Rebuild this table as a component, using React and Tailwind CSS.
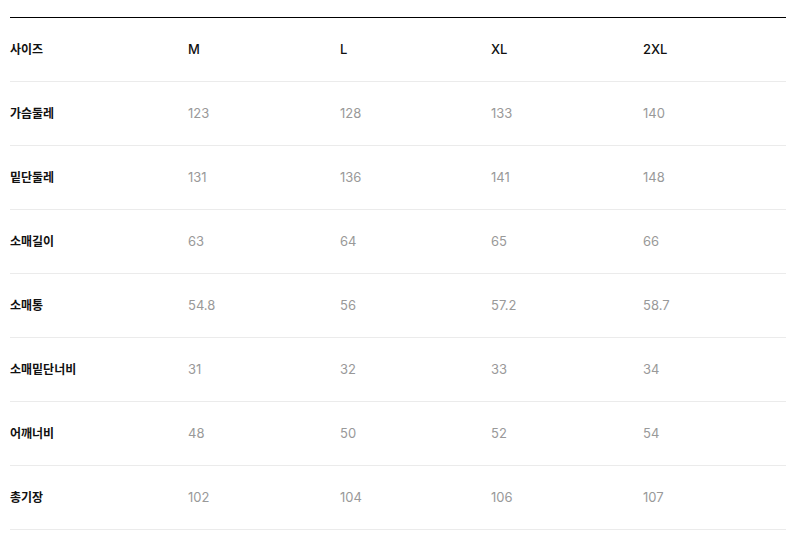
import React from "react";

const header = ["사이즈", "M", "L", "XL", "2XL"];
const rows = [
  ["가슴둘레", "123", "128", "133", "140"],
  ["밑단둘레", "131", "136", "141", "148"],
  ["소매길이", "63", "64", "65", "66"],
  ["소매통", "54.8", "56", "57.2", "58.7"],
  ["소매밑단너비", "31", "32", "33", "34"],
  ["어깨너비", "48", "50", "52", "54"],
  ["총기장", "102", "104", "106", "107"],
];

export default function App() {
  return (
    <div
      className="w-[796px] h-[538px] bg-white pt-[17px] px-[10px]"
      style={{ fontFamily: 'Inter, "Noto Sans CJK KR", sans-serif' }}
    >
      <div className="w-[776px] border-t border-black">
        <div className="grid grid-cols-[178px_152px_151px_152px_1fr] h-[64px] items-center border-b border-[#ebebeb] text-[13px] font-medium text-[#111]">
          {header.map((h, i) => (
            <div key={i} className={i === 0 ? "text-[12px] font-semibold" : ""}>{h}</div>
          ))}
        </div>
        {rows.map((r, ri) => (
          <div
            key={ri}
            className="grid grid-cols-[178px_152px_151px_152px_1fr] h-[64px] items-center border-b border-[#ebebeb] text-[13px]"
          >
            {r.map((c, i) => (
              <div
                key={i}
                className={i === 0 ? "text-[12px] font-semibold text-[#111]" : "text-[#999]"}
              >
                {c}
              </div>
            ))}
          </div>
        ))}
      </div>
    </div>
  );
}
